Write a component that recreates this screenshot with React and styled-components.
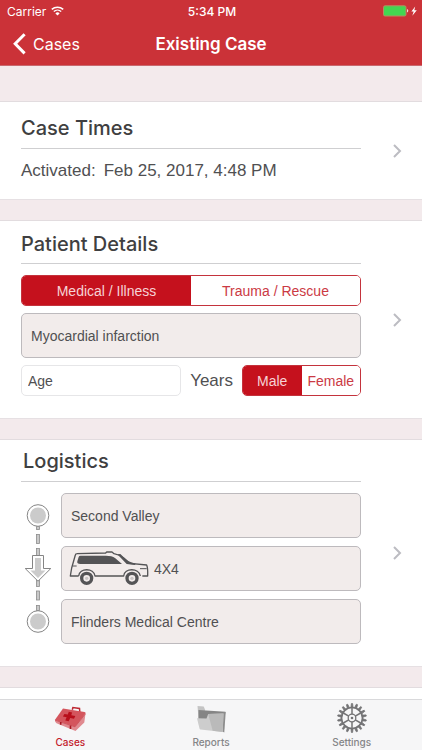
import React, { useState } from "react";
import styled, { createGlobalStyle } from "styled-components";

const GlobalStyle = createGlobalStyle`
  * {
    box-sizing: border-box;
  }
  body {
    margin: 0;
    font-family: "Liberation Sans", Arial, sans-serif;
    color: #505052;
  }
  button, input {
    font: inherit;
    color: inherit;
  }
`;

const Screen = styled.div`
  display: flex;
  flex-direction: column;
  height: 100vh;
  background-color: #f3eaec;
`;

const Header = styled.header`
  flex: none;
  color: #fff;
  background-color: #cb3238;
  border-bottom: 1px solid #c9686e;
  font-family: Inter, sans-serif;
`;

const StatusBar = styled.div`
  display: grid;
  grid-template-columns: 1fr auto 1fr;
  align-items: center;
  height: 22px;
  padding: 0 5px 0 7px;
  font-size: 12px;
`;

const StatusGroup = styled.div`
  display: flex;
  align-items: center;
  justify-content: ${(props) => props.$align || "flex-start"};
  gap: 5px;
`;

const Clock = styled.span`
  font-weight: 500;
`;

const NavBar = styled.div`
  display: grid;
  grid-template-columns: 1fr auto 1fr;
  align-items: center;
  height: 43px;
  padding: 0 13px;
`;

const BackButton = styled.button`
  display: flex;
  align-items: center;
  gap: 7px;
  padding: 0;
  border: none;
  background: none;
  font-size: 16px;
  cursor: pointer;
`;

const NavTitle = styled.h1`
  margin: 0;
  font-size: 17px;
  font-weight: 600;
`;

const Content = styled.main`
  display: flex;
  flex-direction: column;
  flex: 1;
  gap: 20px;
  min-height: 0;
  padding-top: 35px;
  overflow-y: auto;
  scrollbar-width: none;
`;

const Card = styled.section`
  display: flex;
  flex: none;
  padding-left: 21px;
  background-color: #fff;
  border-top: 1px solid #e2dcdf;
  border-bottom: 1px solid #e6e0e3;
`;

const CardBody = styled.div`
  flex: 1;
  min-width: 0;
  padding-bottom: ${(props) => props.$bottom || 22}px;
`;

const CardTitle = styled.h2`
  margin: 0 0 ${(props) => props.$gap || 11}px;
  padding: ${(props) => props.$pad || "11px 0 7px"};
  border-bottom: 1px solid #cfcfd1;
  color: #3f3f41;
  font-family: Inter, sans-serif;
  font-size: 20px;
  font-weight: 500;
  line-height: 24px;
`;

const OpenButton = styled.button`
  display: flex;
  align-items: center;
  justify-content: center;
  width: 61px;
  padding: 0 0 0 11px;
  border: none;
  background: none;
  cursor: pointer;
`;

const TimeRow = styled.div`
  display: flex;
  gap: 8px;
  font-size: 17px;
  line-height: 24px;
`;

const Segments = styled.div`
  display: flex;
  width: ${(props) => props.$width || "100%"};
  height: 31px;
  border: 1px solid #c4333d;
  border-radius: 5px;
  overflow: hidden;
`;

const Segment = styled.button`
  flex: 1;
  padding: 0;
  border: none;
  background-color: ${(props) => (props.$active ? "#c5111d" : "#fff")};
  color: ${(props) => (props.$active ? "#f6d3d6" : "#cb3a44")};
  font-size: 14px;
  cursor: pointer;
`;

const Field = styled.div`
  display: flex;
  align-items: center;
  gap: 5px;
  height: 45px;
  padding: 0 ${(props) => (props.$icon ? 7 : 9)}px;
  background-color: #f2eceb;
  border: 1px solid #bdbabd;
  border-radius: 5px;
  font-size: 14px;
`;

const Stack = styled.div`
  display: flex;
  flex-direction: column;
  flex: 1;
  gap: ${(props) => props.$gap || 8}px;
`;

const AgeRow = styled.div`
  display: flex;
  align-items: center;
  gap: 9px;
`;

const AgeInput = styled.input`
  flex: 1;
  min-width: 0;
  height: 31px;
  padding: 0 6px;
  background-color: #fff;
  border: 1px solid #e6e6e8;
  border-radius: 5px;
  font-size: 14px;
  &::placeholder {
    color: #505052;
    opacity: 1;
  }
`;

const AgeLabel = styled.label`
  font-size: 17px;
`;

const Route = styled.div`
  display: flex;
`;

const TabBar = styled.nav`
  display: flex;
  flex: none;
  height: 51px;
  border-top: 1px solid #d9d9db;
  background-color: #f6f6f7;
`;

const Tab = styled.button`
  display: flex;
  flex: 1;
  flex-direction: column;
  align-items: center;
  gap: 3px;
  padding: 3px 0 0;
  border: none;
  background: none;
  color: ${(props) => (props.$active ? "#c3202b" : "#858587")};
  font-family: Inter, sans-serif;
  font-size: 10px;
  font-weight: 500;
  line-height: 12px;
  cursor: pointer;
`;

function WifiIcon() {
  return (
    <svg width="13" height="10" viewBox="0 0 13 10" fill="none" stroke="#fff">
      <path d="M0.8 3.4a8.4 8.4 0 0 1 11.4 0" strokeWidth="1.5" />
      <path d="M2.8 5.6a5.4 5.4 0 0 1 7.4 0" strokeWidth="1.4" />
      <path d="M6.5 9.6L4.4 7.4a3 3 0 0 1 4.2 0z" fill="#fff" stroke="none" />
    </svg>
  );
}

function BatteryIcon() {
  return (
    <svg width="34" height="12" viewBox="0 0 34 12">
      <rect x="0.5" y="0.8" width="22.500" height="10.2" rx="1.5" fill="#43d651" stroke="#b98a62" />
      <path d="M24.2 4c1.4.6 1.4 3 0 3.600z" fill="#fff" />
      <path d="M32.2 1.4L28.4 6.500h2.300l-1.400 4.300 4.500-5.600h-2.500z" fill="#fff" />
    </svg>
  );
}

function BackIcon() {
  return (
    <svg width="13" height="22" viewBox="0 0 13 22" fill="none" stroke="#fff" strokeWidth="3">
      <path d="M11.6 1.2L2.2 10.8l9.4 9.6" />
    </svg>
  );
}

function ChevronIcon() {
  return (
    <svg width="9" height="14" viewBox="0 0 9 14" fill="none" stroke="#bcbcc2" strokeWidth="2">
      <path d="M1 1l6 6-6 6" />
    </svg>
  );
}

function RouteLine() {
  return (
    <svg width="40" height="151" viewBox="0 0 40 151">
      <g fill="#c9c9c9" stroke="#8c8c8c" strokeWidth="0.8">
        <rect x="15.5" y="33" width="3" height="3.5" />
        <rect x="15.5" y="41.5" width="3" height="9" />
        <rect x="15.5" y="55.5" width="3" height="7" />
        <rect x="15.5" y="87" width="3" height="6.5" />
        <rect x="15.5" y="98" width="3" height="9" />
        <rect x="15.5" y="112.5" width="3" height="5" />
      </g>
      <g fill="#fff" stroke="#858585">
        <circle cx="17" cy="22.5" r="10.8" />
        <circle cx="17" cy="128.5" r="10.8" />
        <path d="M11.5 62.5h11v13h7.3L17 88.2 4.2 75.5h7.3z" />
      </g>
      <g fill="#cbcbcb">
        <circle cx="17" cy="22.5" r="8" />
        <circle cx="17" cy="128.5" r="8" />
        <path d="M14 65h6v12.5h4.5L17 85l-7.5-7.5H14z" />
      </g>
    </svg>
  );
}

function TruckIcon() {
  return (
    <svg width="80" height="37" viewBox="147 32 240 111">
      <g fill="none" stroke="#545456" strokeWidth="4" strokeLinejoin="round">
        <path d="M176 110H151l4-24 11-39q1-4 5-4l86-2 3-3h16l6 5q17 3 29 13l19 16 50 5q4 10 3 33h-16" />
        <path d="M176 110c2-25 46-25 49 0h86c2-25 46-25 50 0" />
        <path d="M158 80h12M360 88h20" strokeWidth="3" />
      </g>
      <path d="M182 49h76q18 0 27 7l21 18H181q-11 0-9-8l4-13q1-4 6-4z" fill="#545456" />
      <path d="M292 45l9-1 22 21 24 8-2 4-25-3z" fill="#545456" />
      <circle cx="200" cy="117" r="15" fill="#f2eceb" stroke="#545456" strokeWidth="10" />
      <circle cx="336" cy="117" r="15" fill="#f2eceb" stroke="#545456" strokeWidth="10" />
      <circle cx="200" cy="117" r="5" fill="#c9c5c5" />
      <circle cx="336" cy="117" r="5" fill="#c9c5c5" />
    </svg>
  );
}

function CasesIcon() {
  return (
    <svg width="32" height="30" viewBox="0 0 32 30">
      <path d="M18.3 6.8l.6-2.3 6.600 1 .3 3.800" fill="none" stroke="#bd2731" strokeWidth="1.500" />
      <path d="M9 5.500l21.500 3.500q1.400.3 1 1.500L21 24.500 1.500 18.500q-1-.8-.3-2z" fill="#d4555d" />
      <path d="M1 16.800L21 23.500 31.500 10.500l-1.200 9L21.500 28 2.500 20.300q-1.300-.6-1.500-3.500z" fill="#e08a90" />
      <path d="M1.200 17.200L21 23.800 31.300 11" fill="none" stroke="#c94a53" strokeWidth="0.800" />
      <path d="M14.800 8.800l3.300.6-.8 2.800 4 .8-1.300 2.700-3.800-.7-1.500 3.200-3.400-.8 1.300-3.100-3.700-.8 1.500-2.500 3.400.6z" fill="#b80f1b" />
      <path d="M6.700 19v2.800M16.500 22.500v3.500" stroke="#a81822" strokeWidth="1.600" />
    </svg>
  );
}

function ReportsIcon() {
  return (
    <svg width="32" height="30" viewBox="0 0 32 30">
      <path d="M2.500 3l6.200.6 1.300 3 .5 9L4 22z" fill="#c4c4c4" />
      <path d="M3.500 7l27 1.800-1.500 9-25.500-1z" fill="#858585" />
      <path d="M28 9.500l2.700-.5-1.400 20.500-2-1z" fill="#8d8d8d" />
      <path d="M2 15.200l9.500.4 1.700-4.600 15.300-.5-.8 18.500L5.500 26.500q-.8-.2-1-1z" fill="#cdcdcd" />
      <path d="M13.200 11l15.300-.5-.8 18.500-10-1.200z" fill="#bababa" />
    </svg>
  );
}

function SettingsIcon() {
  const turns = Array.from({ length: 18 }, (_, i) => i * 20);
  return (
    <svg width="32" height="30" viewBox="-16 -15 32 30" fill="none" stroke="#737375">
      <circle r="10.5" strokeWidth="1.7" />
      <circle r="3.8" strokeWidth="1.3" />
      <circle r="1.3" fill="#737375" stroke="none" />
      {turns.map((deg) => (
        <path key={deg} d="M-1 -11l.4 -3.400h1.200l.4 3.400z" fill="#737375" strokeWidth="0.8" transform={`rotate(${deg})`} />
      ))}
      {[0, 60, 120, 180, 240, 300].map((deg) => (
        <path key={deg} d="M0 -3.800V-10" strokeWidth="1.5" transform={`rotate(${deg})`} />
      ))}
    </svg>
  );
}

const tabs = [
  { label: "Cases", Icon: CasesIcon },
  { label: "Reports", Icon: ReportsIcon },
  { label: "Settings", Icon: SettingsIcon },
];

function SegmentedControl({ label, options, value, onChange, width }) {
  return (
    <Segments role="group" aria-label={label} $width={width}>
      {options.map((option) => (
        <Segment
          key={option}
          aria-pressed={option === value}
          $active={option === value}
          onClick={() => onChange(option)}
        >
          {option}
        </Segment>
      ))}
    </Segments>
  );
}

export default function App() {
  const [caseType, setCaseType] = useState("Medical / Illness");
  const [sex, setSex] = useState("Male");
  const [age, setAge] = useState("");
  const [tab, setTab] = useState("Cases");

  return (
    <Screen>
      <GlobalStyle />
      <Header>
        <StatusBar>
          <StatusGroup>
            Carrier
            <WifiIcon />
          </StatusGroup>
          <Clock>5:34 PM</Clock>
          <StatusGroup $align="flex-end">
            <BatteryIcon />
          </StatusGroup>
        </StatusBar>
        <NavBar>
          <BackButton>
            <BackIcon />
            Cases
          </BackButton>
          <NavTitle>Existing Case</NavTitle>
        </NavBar>
      </Header>

      <Content>
        <Card>
          <CardBody $bottom={16}>
            <CardTitle $pad="14px 0 8px" $gap={10}>Case Times</CardTitle>
            <TimeRow>
              <span>Activated:</span>
              <span>Feb 25, 2017, 4:48 PM</span>
            </TimeRow>
          </CardBody>
          <OpenButton aria-label="Edit case times">
            <ChevronIcon />
          </OpenButton>
        </Card>

        <Card>
          <CardBody>
            <CardTitle>Patient Details</CardTitle>
            <Stack $gap={7}>
              <SegmentedControl
                label="Case type"
                options={["Medical / Illness", "Trauma / Rescue"]}
                value={caseType}
                onChange={setCaseType}
              />
              <Field>Myocardial infarction</Field>
              <AgeRow>
                <AgeInput
                  id="age"
                  placeholder="Age"
                  value={age}
                  onChange={(e) => setAge(e.target.value)}
                />
                <AgeLabel htmlFor="age">Years</AgeLabel>
                <SegmentedControl
                  label="Sex"
                  options={["Male", "Female"]}
                  value={sex}
                  onChange={setSex}
                  width="119px"
                />
              </AgeRow>
            </Stack>
          </CardBody>
          <OpenButton aria-label="Edit patient details">
            <ChevronIcon />
          </OpenButton>
        </Card>

        <Card>
          <CardBody>
            <CardTitle $pad="9px 2px 8px">Logistics</CardTitle>
            <Route>
              <RouteLine />
              <Stack>
                <Field>Second Valley</Field>
                <Field $icon>
                  <TruckIcon />
                  4X4
                </Field>
                <Field>Flinders Medical Centre</Field>
              </Stack>
            </Route>
          </CardBody>
          <OpenButton aria-label="Edit logistics">
            <ChevronIcon />
          </OpenButton>
        </Card>

        <Card>
          <CardBody />
        </Card>
      </Content>

      <TabBar>
        {tabs.map(({ label, Icon }) => (
          <Tab key={label} $active={label === tab} onClick={() => setTab(label)}>
            <Icon />
            {label}
          </Tab>
        ))}
      </TabBar>
    </Screen>
  );
}
